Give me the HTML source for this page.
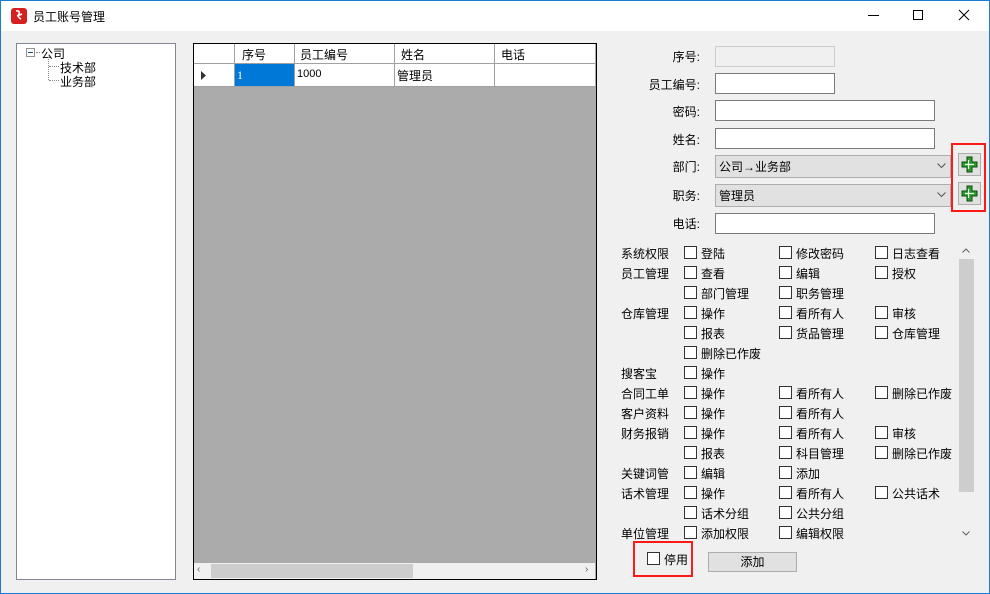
<!DOCTYPE html>
<html><head><meta charset="utf-8"><style>
*{box-sizing:border-box;margin:0;padding:0}
body{width:990px;height:594px;overflow:hidden;background:#f0f0f0;font-family:"Liberation Sans","Noto Sans CJK SC","WenQuanYi Zen Hei",sans-serif;font-size:12px;color:#000;position:relative}
.a{position:absolute;white-space:nowrap}
.win{position:absolute;left:0;top:0;width:990px;height:594px;border:1px solid #1a7bd6;pointer-events:none}
.title{position:absolute;left:0;top:0;width:990px;height:31px;background:#fff}
.inp{position:absolute;background:#fff;border:1px solid #7a7a7a}
.lbl{position:absolute;width:80px;text-align:right;left:620px}
.cb{position:absolute;width:13px;height:13px;border:1px solid #333;background:#fff}
.cmb{position:absolute;background:#e1e1e1;border:1px solid #adadad;padding:2px 3px}
.plus{position:absolute;width:23px;height:23px;border:1px solid #adadad;background:#e1e1e1}
</style></head><body>
<div class="title"></div>
<svg class="a" style="left:10px;top:7px" width="18" height="18" viewBox="0 0 18 18"><rect x="1" y="1" width="16" height="16" rx="3" fill="#d42020"/><path d="M6 4 Q10 3 9 7 Q7 10 11 12 M7 9 L12 7" stroke="#fff" stroke-width="1.6" fill="none"/></svg>
<div class="a" style="left:33px;top:8px;font-size:12px">员工账号管理</div>
<div class="a" style="left:868px;top:15px;width:11px;height:1px;background:#000"></div>
<div class="a" style="left:913px;top:10px;width:10px;height:10px;border:1px solid #000"></div>
<svg class="a" style="left:958px;top:9px" width="12" height="12"><path d="M1 1L11 11M11 1L1 11" stroke="#000" stroke-width="1"/></svg>

<!-- tree -->
<div class="a" style="left:16px;top:43px;width:160px;height:537px;background:#fff;border:1px solid #828790"></div>
<div class="a" style="left:26px;top:48px;width:9px;height:9px;border:1px solid #919191;background:#fff"></div>
<div class="a" style="left:28px;top:52px;width:5px;height:1px;background:#1e3f8a"></div>
<div class="a" style="left:36px;top:52px;width:4px;border-top:1px dotted #888"></div>
<div class="a" style="left:41px;top:45px">公司</div>
<div class="a" style="left:48px;top:57px;height:23px;border-left:1px dotted #888"></div>
<div class="a" style="left:49px;top:66px;width:10px;border-top:1px dotted #888"></div>
<div class="a" style="left:49px;top:80px;width:10px;border-top:1px dotted #888"></div>
<div class="a" style="left:60px;top:59px">技术部</div>
<div class="a" style="left:60px;top:73px">业务部</div>

<!-- grid -->
<div class="a" style="left:193px;top:43px;width:404px;height:537px;background:#ababab;border:1px solid #000"></div>
<div class="a" style="left:194px;top:44px;width:401px;height:20px;background:#fff"></div>
<div class="a" style="left:194px;top:64px;width:401px;height:22px;background:#fff"></div>
<div class="a" style="left:234px;top:64px;width:60px;height:22px;background:#0078d7"></div>
<div class="a" style="left:194px;top:63px;width:401px;height:1px;background:#a0a0a0"></div>
<div class="a" style="left:194px;top:86px;width:401px;height:1px;background:#a0a0a0"></div>
<div class="a" style="left:234px;top:44px;width:1px;height:43px;background:#a0a0a0"></div>
<div class="a" style="left:294px;top:44px;width:1px;height:43px;background:#a0a0a0"></div>
<div class="a" style="left:394px;top:44px;width:1px;height:43px;background:#a0a0a0"></div>
<div class="a" style="left:494px;top:44px;width:1px;height:43px;background:#a0a0a0"></div>
<div class="a" style="left:242px;top:46px">序号</div>
<div class="a" style="left:300px;top:46px">员工编号</div>
<div class="a" style="left:401px;top:46px">姓名</div>
<div class="a" style="left:501px;top:46px">电话</div>
<svg class="a" style="left:201px;top:71px" width="6" height="9"><path d="M0 0L5 4.5L0 9Z" fill="#333"/></svg>
<div class="a" style="left:237px;top:68px;color:#fff;font-family:'Liberation Serif',serif">1</div>
<div class="a" style="left:297px;top:68px;font-size:11px">1000</div>
<div class="a" style="left:397px;top:67px">管理员</div>
<div class="a" style="left:194px;top:563px;width:401px;height:16px;background:#f0f0f0"></div>
<div class="a" style="left:211px;top:564px;width:202px;height:14px;background:#cdcdcd"></div>
<div class="a" style="left:197px;top:564px;color:#606060;font-size:10px">‹</div>
<div class="a" style="left:585px;top:564px;color:#606060;font-size:10px">›</div>

<!-- form -->
<div class="lbl" style="top:48px">序号:</div>
<div class="a" style="left:715px;top:46px;width:120px;height:21px;border:1px solid #ccc;background:#f0f0f0"></div>
<div class="lbl" style="top:76px">员工编号:</div>
<div class="inp" style="left:715px;top:73px;width:120px;height:21px"></div>
<div class="lbl" style="top:103px">密码:</div>
<div class="inp" style="left:715px;top:100px;width:220px;height:21px"></div>
<div class="lbl" style="top:131px">姓名:</div>
<div class="inp" style="left:715px;top:128px;width:220px;height:21px"></div>
<div class="lbl" style="top:158px">部门:</div>
<div class="cmb" style="left:715px;top:155px;width:236px;height:23px">公司→业务部</div>
<div class="lbl" style="top:187px">职务:</div>
<div class="cmb" style="left:715px;top:184px;width:236px;height:23px">管理员</div>
<svg class="a" style="left:937px;top:163px" width="9" height="6"><path d="M0.5 0.5L4.5 4.5L8.5 0.5" stroke="#555" fill="none"/></svg>
<svg class="a" style="left:937px;top:192px" width="9" height="6"><path d="M0.5 0.5L4.5 4.5L8.5 0.5" stroke="#555" fill="none"/></svg>
<div class="lbl" style="top:215px">电话:</div>
<div class="inp" style="left:715px;top:213px;width:220px;height:21px"></div>
<div class="a" style="left:951px;top:143px;width:35px;height:69px;border:2px solid #ff1a1a"></div>
<div class="plus" style="left:958px;top:153px"></div>
<div class="plus" style="left:958px;top:182px"></div>
<svg class="a" style="left:961px;top:156px" width="17" height="17" viewBox="0 0 17 17"><path d="M6 1H11V6H16V11H11V16H6V11H1V6H6Z" fill="#2f9b2f" stroke="#0b4d0b"/><path d="M7.5 4V13M4 8.5H13" stroke="#e8ffe8" stroke-width="1.2"/></svg>
<svg class="a" style="left:961px;top:185px" width="17" height="17" viewBox="0 0 17 17"><path d="M6 1H11V6H16V11H11V16H6V11H1V6H6Z" fill="#2f9b2f" stroke="#0b4d0b"/><path d="M7.5 4V13M4 8.5H13" stroke="#e8ffe8" stroke-width="1.2"/></svg>

<!-- scrollbar -->
<div class="a" style="left:958px;top:241px;width:17px;height:300px;background:#f0f0f0"></div>
<div class="a" style="left:959px;top:259px;width:15px;height:233px;background:#cdcdcd"></div>
<svg class="a" style="left:962px;top:248px" width="8" height="5"><path d="M0.5 4.5L4 1L7.5 4.5" stroke="#606060" fill="none"/></svg>
<svg class="a" style="left:962px;top:531px" width="8" height="5"><path d="M0.5 0.5L4 4L7.5 0.5" stroke="#606060" fill="none"/></svg>

<!-- perms -->
<div class="a" style="left:621px;top:245px">系统权限</div>
<div class="a" style="left:621px;top:265px">员工管理</div>
<div class="a" style="left:621px;top:305px">仓库管理</div>
<div class="a" style="left:621px;top:365px">搜客宝</div>
<div class="a" style="left:621px;top:385px">合同工单</div>
<div class="a" style="left:621px;top:405px">客户资料</div>
<div class="a" style="left:621px;top:425px">财务报销</div>
<div class="a" style="left:621px;top:465px">关键词管</div>
<div class="a" style="left:621px;top:485px">话术管理</div>
<div class="a" style="left:621px;top:525px">单位管理</div>

<div class="cb" style="left:684px;top:246px"></div><div class="a" style="left:701px;top:245px">登陆</div>
<div class="cb" style="left:779px;top:246px"></div><div class="a" style="left:796px;top:245px">修改密码</div>
<div class="cb" style="left:875px;top:246px"></div><div class="a" style="left:892px;top:245px">日志查看</div>
<div class="cb" style="left:684px;top:266px"></div><div class="a" style="left:701px;top:265px">查看</div>
<div class="cb" style="left:779px;top:266px"></div><div class="a" style="left:796px;top:265px">编辑</div>
<div class="cb" style="left:875px;top:266px"></div><div class="a" style="left:892px;top:265px">授权</div>
<div class="cb" style="left:684px;top:286px"></div><div class="a" style="left:701px;top:285px">部门管理</div>
<div class="cb" style="left:779px;top:286px"></div><div class="a" style="left:796px;top:285px">职务管理</div>
<div class="cb" style="left:684px;top:306px"></div><div class="a" style="left:701px;top:305px">操作</div>
<div class="cb" style="left:779px;top:306px"></div><div class="a" style="left:796px;top:305px">看所有人</div>
<div class="cb" style="left:875px;top:306px"></div><div class="a" style="left:892px;top:305px">审核</div>
<div class="cb" style="left:684px;top:326px"></div><div class="a" style="left:701px;top:325px">报表</div>
<div class="cb" style="left:779px;top:326px"></div><div class="a" style="left:796px;top:325px">货品管理</div>
<div class="cb" style="left:875px;top:326px"></div><div class="a" style="left:892px;top:325px">仓库管理</div>
<div class="cb" style="left:684px;top:346px"></div><div class="a" style="left:701px;top:345px">删除已作废</div>
<div class="cb" style="left:684px;top:366px"></div><div class="a" style="left:701px;top:365px">操作</div>
<div class="cb" style="left:684px;top:386px"></div><div class="a" style="left:701px;top:385px">操作</div>
<div class="cb" style="left:779px;top:386px"></div><div class="a" style="left:796px;top:385px">看所有人</div>
<div class="cb" style="left:875px;top:386px"></div><div class="a" style="left:892px;top:385px">删除已作废</div>
<div class="cb" style="left:684px;top:406px"></div><div class="a" style="left:701px;top:405px">操作</div>
<div class="cb" style="left:779px;top:406px"></div><div class="a" style="left:796px;top:405px">看所有人</div>
<div class="cb" style="left:684px;top:426px"></div><div class="a" style="left:701px;top:425px">操作</div>
<div class="cb" style="left:779px;top:426px"></div><div class="a" style="left:796px;top:425px">看所有人</div>
<div class="cb" style="left:875px;top:426px"></div><div class="a" style="left:892px;top:425px">审核</div>
<div class="cb" style="left:684px;top:446px"></div><div class="a" style="left:701px;top:445px">报表</div>
<div class="cb" style="left:779px;top:446px"></div><div class="a" style="left:796px;top:445px">科目管理</div>
<div class="cb" style="left:875px;top:446px"></div><div class="a" style="left:892px;top:445px">删除已作废</div>
<div class="cb" style="left:684px;top:466px"></div><div class="a" style="left:701px;top:465px">编辑</div>
<div class="cb" style="left:779px;top:466px"></div><div class="a" style="left:796px;top:465px">添加</div>
<div class="cb" style="left:684px;top:486px"></div><div class="a" style="left:701px;top:485px">操作</div>
<div class="cb" style="left:779px;top:486px"></div><div class="a" style="left:796px;top:485px">看所有人</div>
<div class="cb" style="left:875px;top:486px"></div><div class="a" style="left:892px;top:485px">公共话术</div>
<div class="cb" style="left:684px;top:506px"></div><div class="a" style="left:701px;top:505px">话术分组</div>
<div class="cb" style="left:779px;top:506px"></div><div class="a" style="left:796px;top:505px">公共分组</div>
<div class="cb" style="left:684px;top:526px"></div><div class="a" style="left:701px;top:525px">添加权限</div>
<div class="cb" style="left:779px;top:526px"></div><div class="a" style="left:796px;top:525px">编辑权限</div>

<div class="a" style="left:633px;top:541px;width:60px;height:36px;border:2px solid #ff1a1a"></div>
<div class="cb" style="left:647px;top:552px"></div>
<div class="a" style="left:664px;top:551px">停用</div>
<div class="a" style="left:708px;top:552px;width:89px;height:20px;background:#e1e1e1;border:1px solid #adadad;text-align:center;line-height:18px">添加</div>
<div class="win"></div>
</body></html>
